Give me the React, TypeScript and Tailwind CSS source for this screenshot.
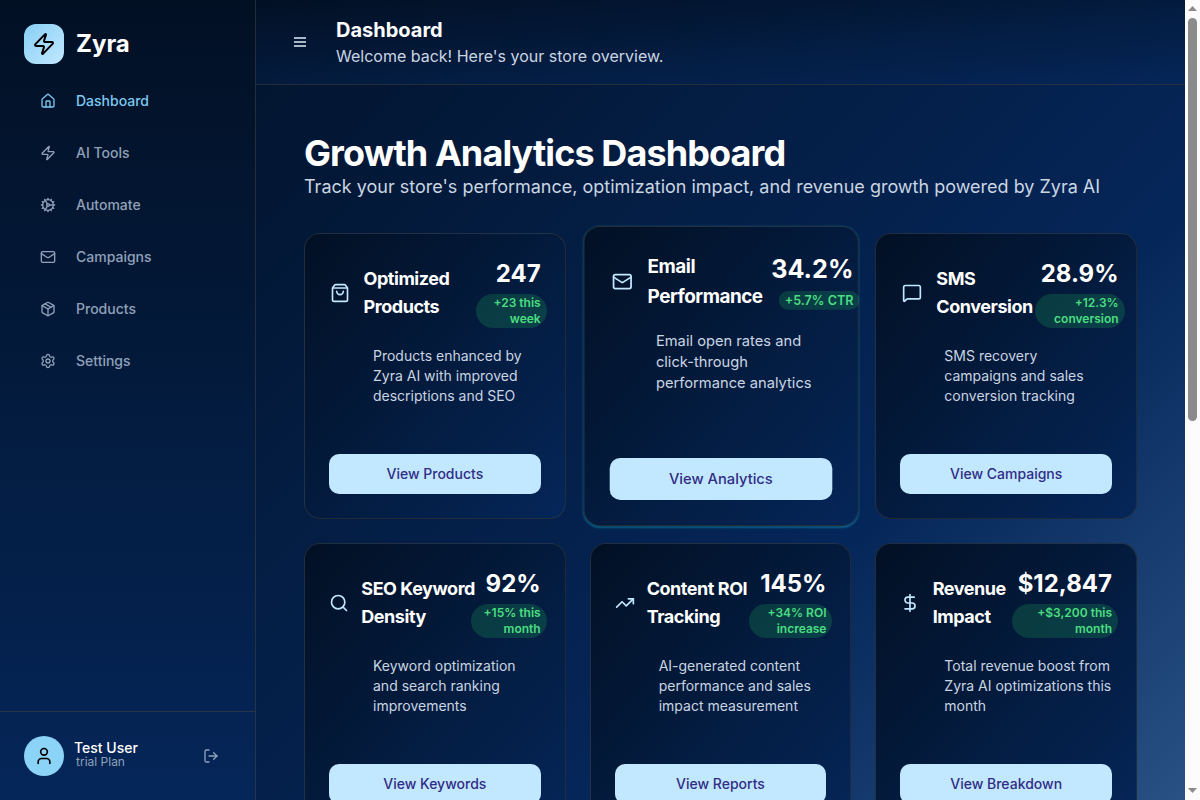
import type { ReactNode } from "react";
import {
  Cog,
  DollarSign,
  House,
  LogOut,
  Mail,
  MessageSquare,
  Package,
  Search,
  Settings,
  ShoppingBag,
  TrendingUp,
  User,
  Zap,
} from "lucide-react";

const nav = [
  { label: "Dashboard", Icon: House, active: true },
  { label: "AI Tools", Icon: Zap },
  { label: "Automate", Icon: Cog },
  { label: "Campaigns", Icon: Mail },
  { label: "Products", Icon: Package },
  { label: "Settings", Icon: Settings },
];

type CardData = {
  icon: ReactNode;
  iconBox: string;
  title: string[];
  value: string;
  badge: string[];
  right: string;
  badgeBox: string;
  desc: string[];
  button: string;
  hovered?: boolean;
};

const cards: CardData[] = [
  {
    icon: <ShoppingBag size={20} />,
    iconBox: "w-[22.5px]",
    title: ["Optimized", "Products"],
    value: "247",
    badge: ["+23 this", "week"],
    right: "",
    badgeBox: "w-[71px]",
    desc: ["Products enhanced by", "Zyra AI with improved", "descriptions and SEO"],
    button: "View Products",
  },
  {
    icon: <Mail size={20} />,
    iconBox: "w-6",
    title: ["Email", "Performance"],
    value: "34.2%",
    badge: ["+5.7% CTR"],
    right: "-mr-[20.5px]",
    badgeBox: "",
    desc: ["Email open rates and", "click-through", "performance analytics"],
    button: "View Analytics",
    hovered: true,
  },
  {
    icon: <MessageSquare size={20} />,
    iconBox: "w-6",
    title: ["SMS", "Conversion"],
    value: "28.9%",
    badge: ["+12.3%", "conversion"],
    right: "-mr-[6.6px]",
    badgeBox: "w-[90px]",
    desc: ["SMS recovery", "campaigns and sales", "conversion tracking"],
    button: "View Campaigns",
  },
  {
    icon: <Search size={20} />,
    iconBox: "w-[20.3px]",
    title: ["SEO Keyword", "Density"],
    value: "92%",
    badge: ["+15% this", "month"],
    right: "",
    badgeBox: "w-[76px]",
    desc: ["Keyword optimization", "and search ranking", "improvements"],
    button: "View Keywords",
  },
  {
    icon: <TrendingUp size={20} />,
    iconBox: "w-5",
    title: ["Content ROI", "Tracking"],
    value: "145%",
    badge: ["+34% ROI", "increase"],
    right: "-mr-[0.15px]",
    badgeBox: "w-[83.3px]",
    desc: ["AI-generated content", "performance and sales", "impact measurement"],
    button: "View Reports",
  },
  {
    icon: <DollarSign size={20} />,
    iconBox: "w-[20.3px]",
    title: ["Revenue", "Impact"],
    value: "$12,847",
    badge: ["+$3,200 this", "month"],
    right: "",
    badgeBox: "w-[106px]",
    desc: ["Total revenue boost from", "Zyra AI optimizations this", "month"],
    button: "View Breakdown",
  },
];

function Lines({ items }: { items: string[] }) {
  return (
    <>
      {items.map((t) => (
        <span key={t} className="block whitespace-nowrap">
          {t}
        </span>
      ))}
    </>
  );
}

function Card({ c }: { c: CardData }) {
  return (
    <div
      className={
        "flex h-[286px] min-w-0 flex-col rounded-2xl border border-[#404040]/50 bg-linear-to-br from-[#021024] to-[#052659] p-6 " +
        (c.hovered ? "scale-105 shadow-[0_1px_2px_0_rgba(6,182,212,0.42)]" : "")
      }
    >
      <div className="flex items-center justify-between">
        <div className="flex items-center gap-3">
          <span className={"flex shrink-0 justify-center text-[#c1e8ff] " + c.iconBox}>{c.icon}</span>
          <h3 className="text-lg leading-7 font-bold tracking-tight text-white">
            <Lines items={c.title} />
          </h3>
        </div>
        <div className={"flex w-0 shrink-0 flex-col items-end " + c.right}>
          <div className="text-2xl font-bold whitespace-nowrap text-white">{c.value}</div>
          <div
            className={
              "mt-1 -mr-1.5 rounded-full bg-[#22c55e]/20 px-1.5 py-px text-right text-xs font-semibold text-[#4ade80] " +
              c.badgeBox
            }
          >
            <Lines items={c.badge} />
          </div>
        </div>
      </div>
      <p className="mt-[18px] pl-11 text-sm text-slate-300">
        <Lines items={c.desc} />
      </p>
      <button className="mt-auto h-10 w-full shrink-0 rounded-[10px] bg-[#c1e8ff] text-sm font-medium text-indigo-900">
        {c.button}
      </button>
    </div>
  );
}

function Sidebar() {
  return (
    <aside className="flex h-[800px] w-64 shrink-0 flex-col border-r border-[#404040]/60 bg-linear-to-b from-[#021024] to-[#052659]">
      <div className="flex items-center gap-3 px-6 pt-6">
        <div className="flex size-10 items-center justify-center rounded-xl bg-linear-to-br from-[#87d0f5] to-[#c1e8ff] text-black">
          <Zap size={24} />
        </div>
        <span className="text-2xl font-bold text-white">Zyra</span>
      </div>
      <nav className="mt-[11px] flex flex-1 flex-col pl-10">
        {nav.map(({ label, Icon, active }) => (
          <a
            key={label}
            className={
              "flex h-[52px] items-center gap-5 text-sm font-medium " +
              (active ? "text-[#7dc8f0]" : "text-slate-400")
            }
          >
            <Icon size={16} />
            {label}
          </a>
        ))}
      </nav>
      <div className="flex h-[89px] items-center border-t border-[#404040]/60 pr-9 pl-6">
        <div className="flex size-10 items-center justify-center rounded-full bg-[#8bd3f7] text-black">
          <User size={20} />
        </div>
        <div className="ml-2.5 flex flex-1 flex-col pb-0.5">
          <span className="text-sm leading-[14px] font-medium text-white">Test User</span>
          <span className="pl-0.5 text-xs leading-[14px] text-slate-400">trial Plan</span>
        </div>
        <LogOut size={16} className="text-slate-400" />
      </div>
    </aside>
  );
}

function Scrollbar() {
  return (
    <div className="flex w-[15px] shrink-0 flex-col items-center bg-[#fcfcfc]">
      <svg width="15" height="18" viewBox="0 0 15 18" fill="#8b8b8b">
        <path d="M7.5 6 12 11H3z" />
      </svg>
      <div className="h-[403px] w-[9px] rounded-full bg-[#8b8b8b]" />
      <div className="flex-1" />
      <svg width="15" height="15" viewBox="0 0 15 15" fill="#8b8b8b">
        <path d="M3 3h9L7.5 8z" />
      </svg>
    </div>
  );
}

export default function App() {
  return (
    <div className="flex h-[800px] w-[1200px] overflow-hidden bg-[#021024] font-['Inter',sans-serif]">
      <div className="flex h-[1595px] w-[1185px] items-start bg-linear-135 from-[#021024] via-[#052659] via-50% to-[#5483b3] to-95%">
        <Sidebar />
        <div className="min-w-0 flex-1">
          <header className="flex h-[85px] items-center border-b border-[#404040]/60 bg-linear-to-br from-[#021024] to-[#052659] pl-9">
            <svg width="16" height="16" viewBox="0 0 16 16" fill="#a9b8c9">
              <path d="M2 3h12v2H2zM2 7h12v2H2zM2 11h12v2H2z" />
            </svg>
            <div className="ml-7">
              <h1 className="text-xl leading-7 font-bold text-white">Dashboard</h1>
              <p className="text-base text-slate-300">Welcome back! Here's your store overview.</p>
            </div>
          </header>
          <main className="px-12 pt-12">
            <h2 className="text-4xl leading-10 font-bold tracking-tight text-white">Growth Analytics Dashboard</h2>
            <p className="text-lg leading-7 whitespace-nowrap text-slate-300">
              Track your store's performance, optimization impact, and revenue growth powered by Zyra AI
            </p>
            <div className="mt-8 grid grid-cols-3 gap-6">
              {cards.map((c) => (
                <Card key={c.button} c={c} />
              ))}
            </div>
          </main>
        </div>
      </div>
      <Scrollbar />
    </div>
  );
}
